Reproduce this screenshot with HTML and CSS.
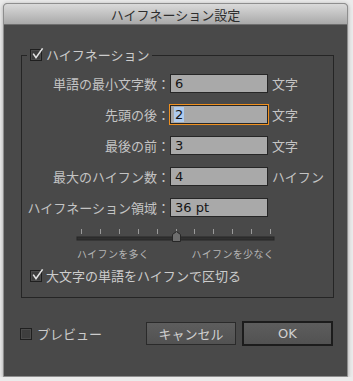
FILE: index.html
```html
<!DOCTYPE html>
<html lang="ja">
<head>
  <meta charset="UTF-8">
  <title>ハイフネーション設定</title>
  <link rel="stylesheet" href="styles.css">
</head>
<body>

  <div class="window">
    <div class="titlebar">ハイフネーション設定</div>
    <div class="content">

      <fieldset class="group">
        <legend class="group-title">
          <span class="checkbox">
            <svg width="14" height="14" viewBox="0 0 14 14"><path d="M3.2 5.6 L6 9.6 L12.6 0.4" fill="none" stroke="#e4e4e4" stroke-width="1.6"/></svg>
          </span>
          ハイフネーション
        </legend>

        <div class="fields">
          <span class="field-label">単語の最小文字数：</span>
          <div class="field">6</div>
          <span class="unit">文字</span>

          <span class="field-label">先頭の後：</span>
          <div class="field focused"><span class="selected">2</span></div>
          <span class="unit">文字</span>

          <span class="field-label">最後の前：</span>
          <div class="field">3</div>
          <span class="unit">文字</span>

          <span class="field-label">最大のハイフン数：</span>
          <div class="field">4</div>
          <span class="unit">ハイフン</span>

          <span class="field-label">ハイフネーション領域：</span>
          <div class="field">36 pt</div>
          <span class="unit"></span>
        </div>

        <div class="slider">
          <svg width="200" height="16" viewBox="0 0 200 16">
            <g stroke="#9a9a9a" stroke-width="1">
              <line x1="5.5" y1="1" x2="5.5" y2="6"/>
              <line x1="24.5" y1="1" x2="24.5" y2="6"/>
              <line x1="43.5" y1="1" x2="43.5" y2="6"/>
              <line x1="62.5" y1="1" x2="62.5" y2="6"/>
              <line x1="81.5" y1="1" x2="81.5" y2="6"/>
              <line x1="100.5" y1="1" x2="100.5" y2="6"/>
              <line x1="118.5" y1="1" x2="118.5" y2="6"/>
              <line x1="137.5" y1="1" x2="137.5" y2="6"/>
              <line x1="156.5" y1="1" x2="156.5" y2="6"/>
              <line x1="175.5" y1="1" x2="175.5" y2="6"/>
              <line x1="194.5" y1="1" x2="194.5" y2="6"/>
            </g>
            <rect x="1" y="9" width="197" height="3" fill="#303030" stroke="#262626" stroke-width="1"/>
            <path d="M96.5 6.5 L100.5 3.5 L104.5 6.5 L104.5 13.5 L96.5 13.5 Z" fill="#6e6e6e" stroke="#262626" stroke-width="1"/>
          </svg>
        </div>
        <div class="slider-labels">
          <span>ハイフンを多く</span>
          <span>ハイフンを少なく</span>
        </div>

        <div class="check-row caps-row">
          <span class="checkbox">
            <svg width="14" height="14" viewBox="0 0 14 14"><path d="M3.2 5.6 L6 9.6 L12.6 0.4" fill="none" stroke="#e4e4e4" stroke-width="1.6"/></svg>
          </span>
          大文字の単語をハイフンで区切る
        </div>
      </fieldset>

      <div class="footer">
        <div class="check-row">
          <span class="checkbox"></span>
          プレビュー
        </div>
        <div class="buttons">
          <button class="btn">キャンセル</button>
          <button class="btn btn-default">OK</button>
        </div>
      </div>

    </div>
  </div>

</body>
</html>
```

FILE: styles.css
```css
body {
  margin: 0;
  padding: 0;
  background-color: #ebebeb;
  font-family: "Noto Sans CJK JP", "DejaVu Sans", sans-serif;
}

.window {
  margin: 3px 0 0 3px;
  width: 345px;
  height: 374px;
  box-sizing: border-box;
  border: 1px solid #8e8e8e;
  border-radius: 4px 4px 0 0;
  background: #494949;
  box-shadow: 0 1px 4px rgba(0, 0, 0, 0.3);
  display: flex;
  flex-direction: column;
}

.titlebar {
  height: 21px;
  line-height: 21px;
  text-align: center;
  font-size: 13px;
  color: #2e2e2e;
  background: linear-gradient(#dadada, #a9a9a9);
  border-radius: 3px 3px 0 0;
  border-bottom: 1px solid #6e6e6e;
  box-sizing: border-box;
}

.content {
  flex: 1;
  padding-top: 1px;
}

/* group box */
.group {
  margin: 21px 0 0 17px;
  padding: 0;
  width: 313px;
  height: 251px;
  box-sizing: border-box;
  border: 1px solid #252525;
  min-width: 0;
}

.group-title {
  margin-left: 5px;
  padding: 0 3px;
  height: 16px;
  line-height: 16px;
  font-size: 13px;
  color: #cccccc;
  display: flex;
  align-items: center;
  gap: 4px;
}

.checkbox {
  width: 12px;
  height: 12px;
  box-sizing: border-box;
  border: 1px solid #1f1f1f;
  background: #3e3e3e;
  box-shadow: inset 0 0 0 1px #4c4c4c;
  position: relative;
  flex-shrink: 0;
}

.checkbox svg {
  position: absolute;
  left: -1px;
  top: -2px;
}

/* number fields */
.fields {
  margin-top: 11px;
  display: grid;
  grid-template-columns: 148px 98px auto;
  grid-auto-rows: 19px;
  row-gap: 12px;
  align-items: center;
}

.field-label {
  text-align: right;
  font-size: 13px;
  line-height: 19px;
  color: #c4c4c4;
}

.field {
  height: 19px;
  box-sizing: border-box;
  border: 1px solid #262626;
  background: #a9a9a9;
  padding-left: 4px;
  font-family: "DejaVu Sans", sans-serif;
  font-size: 13px;
  line-height: 17px;
  color: #151515;
}

.field.focused {
  outline: 1px solid #f0901e;
}

.selected {
  background: #aecbef;
  margin-left: -1px;
  padding: 0 1px;
}

.unit {
  padding-left: 4px;
  font-size: 13px;
  line-height: 19px;
  color: #c4c4c4;
}

/* slider */
.slider {
  margin: 11px 0 0 54px;
  height: 16px;
}

.slider svg {
  display: block;
}

.slider-labels {
  margin: 4px 0 0 55px;
  width: 197px;
  display: flex;
  justify-content: space-between;
  font-size: 10px;
  letter-spacing: 0.3px;
  line-height: 12px;
  color: #b5b5b5;
}

.check-row {
  display: flex;
  align-items: center;
  gap: 5px;
  font-size: 13px;
  line-height: 18px;
  color: #cccccc;
}

.caps-row {
  margin: 7px 0 0 8px;
  gap: 4px;
}

/* bottom row */
.footer {
  margin-top: 23px;
  padding-left: 16px;
  display: flex;
  align-items: center;
}

.buttons {
  margin-left: auto;
  margin-right: 14px;
  display: flex;
  align-items: center;
  gap: 6px;
}

.btn {
  width: 90px;
  height: 23px;
  padding: 0;
  box-sizing: border-box;
  border: 1px solid #2a2a2a;
  background: linear-gradient(#5d5d5d, #525252);
  color: #d0d0d0;
  font-family: "Noto Sans CJK JP", sans-serif;
  font-size: 13px;
  line-height: 19px;
}

.btn-default {
  width: 91px;
  height: 25px;
  border: 2px solid #1c1c1c;
  font-family: "DejaVu Sans", sans-serif;
}
```
